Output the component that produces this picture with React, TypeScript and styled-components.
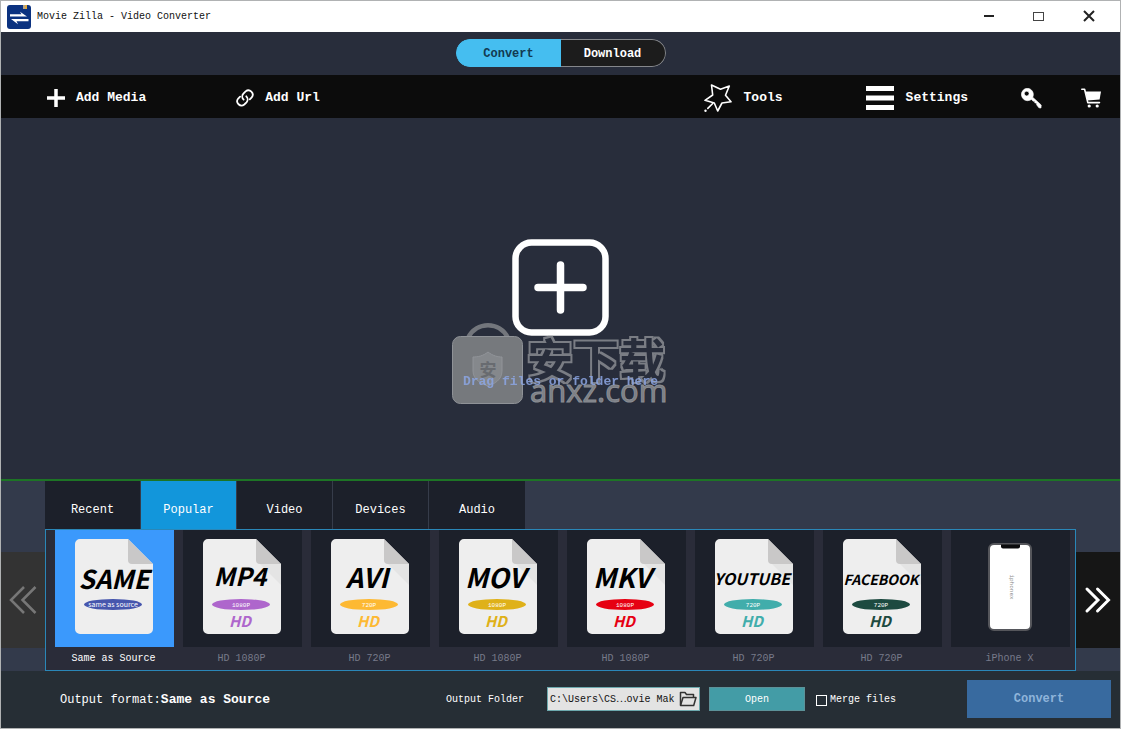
import React, { useState } from 'react';
import styled, { createGlobalStyle } from 'styled-components';

const mono = "'Liberation Mono', 'Noto Sans CJK SC', monospace";
const sans = "'Noto Sans CJK SC', 'Open Sans', sans-serif";

const GlobalStyle = createGlobalStyle`
  *, *::before, *::after { box-sizing: border-box; }
  body { margin: 0; background: #282d3b; }
  button, input { font: inherit; color: inherit; margin: 0; }
  svg { display: block; flex: none; }
`;

const Window = styled.div`
  display: flex;
  flex-direction: column;
  min-height: 100vh;
  border: 1px solid #b0b2b3;
  background: #282d3b;
  color: #fff;
  font-family: ${mono};
  font-size: 12px;
  line-height: 16px;
`;

const TitleBar = styled.header`
  display: flex;
  align-items: center;
  height: 31px;
  padding: 0 23px 0 6px;
  background: #fff;
  color: #111;
`;

const AppTitle = styled.h1`
  flex: 1;
  margin: 0 0 0 6px;
  font-size: 10px;
  font-weight: 400;
  line-height: 16px;
`;

const WindowControls = styled.div`
  display: flex;
  gap: 34px;
`;

const IconButton = styled.button`
  display: flex;
  align-items: center;
  justify-content: center;
  padding: 0;
  border: 0;
  background: none;
  cursor: pointer;
`;

const ModeBar = styled.div`
  display: flex;
  align-items: center;
  justify-content: center;
  height: 43px;
  padding-bottom: 1px;
`;

const ModeSwitch = styled.div`
  display: flex;
  width: 210px;
  height: 28px;
  border-radius: 14px;
  overflow: hidden;
`;

const ModeButton = styled.button<{ $active: boolean }>`
  flex: 1;
  padding: 1px 0 0;
  border: 1px solid ${(p) => (p.$active ? '#45bef0' : '#85878b')};
  background: ${(p) => (p.$active ? '#45bef0' : '#1c1c1c')};
  color: ${(p) => (p.$active ? '#123a52' : '#fff')};
  font-weight: 700;
  cursor: pointer;
  &:first-child { border-radius: 14px 0 0 14px; border-right: 0; }
  &:last-child { border-radius: 0 14px 14px 0; border-left: 0; }
`;

const Toolbar = styled.nav`
  display: flex;
  align-items: center;
  justify-content: space-between;
  height: 43px;
  padding: 3px 19px 0 46px;
  background: #0c0c0c;
`;

const ToolGroup = styled.div<{ $gap: number }>`
  display: flex;
  align-items: center;
  gap: ${(p) => p.$gap}px;
`;

const ToolButton = styled.button<{ $gap?: number }>`
  display: flex;
  align-items: center;
  gap: ${(p) => p.$gap ?? 12}px;
  padding: 0;
  border: 0;
  background: none;
  font-size: 13px;
  font-weight: 700;
  line-height: 16px;
  cursor: pointer;
`;

const DropArea = styled.main`
  display: flex;
  flex: 1;
  align-items: center;
  justify-content: center;
  min-height: 240px;
  padding-top: 32px;
`;

const DropPrompt = styled.div`
  position: relative;
  display: flex;
  flex-direction: column;
  align-items: center;
  gap: 38px;
`;

const DropText = styled.p`
  position: relative;
  z-index: 1;
  margin: 0;
  color: #8ca6e4;
  opacity: 0.85;
  font-size: 13px;
  font-weight: 700;
  line-height: 16px;
`;

const Watermark = styled.div`
  position: absolute;
  left: -11px;
  top: 84px;
  pointer-events: none;
`;

const Formats = styled.section`
  display: grid;
  grid-template-columns: 44px minmax(0, 1fr) 44px;
  grid-template-rows: 48px auto;
  border-top: 2px solid #1d7425;
  background: #333a4b;
`;

const Tabs = styled.div`
  display: flex;
  grid-column: 2;
  grid-row: 1;
`;

const Tab = styled.button<{ $active: boolean }>`
  width: 96px;
  padding: 10px 0 0;
  border: 0;
  border-right: 1px solid #363c4a;
  background: ${(p) => (p.$active ? '#1296db' : '#1c202a')};
  cursor: pointer;
  &:last-child { border-right: 0; }
`;

const Pager = styled.button<{ $enabled: boolean }>`
  grid-row: 2;
  grid-column: ${(p) => (p.$enabled ? 3 : 1)};
  align-self: center;
  display: flex;
  align-items: center;
  justify-content: center;
  height: 96px;
  padding: 0;
  border: 0;
  background: ${(p) => (p.$enabled ? '#161616' : '#333')};
  color: ${(p) => (p.$enabled ? '#fff' : '#777')};
`;

const CardList = styled.div`
  grid-column: 2;
  grid-row: 2;
  display: flex;
  gap: 9px;
  padding: 0 5px 0 9px;
  border: 1px solid #2a87b8;
  background: #2a2c39;
`;

const Card = styled.button<{ $active: boolean }>`
  display: flex;
  flex: 1;
  flex-direction: column;
  min-width: 0;
  padding: 0;
  border: 0;
  background: none;
  color: ${(p) => (p.$active ? '#fff' : '#777a8a')};
  font-size: 10px;
  line-height: 23px;
  cursor: pointer;
`;

const Thumb = styled.span<{ $active: boolean }>`
  display: flex;
  align-items: center;
  justify-content: center;
  width: 100%;
  height: 117px;
  padding: 0 2px 4px 0;
  background: ${(p) => (p.$active ? '#3b99fc' : '#1c202a')};
`;

const CardName = styled.span`
  width: 100%;
  padding-right: 2px;
  text-align: center;
`;

const Footer = styled.footer`
  display: flex;
  align-items: center;
  justify-content: space-between;
  height: 57px;
  padding: 0 9px 1px 59px;
  background: #262e35;
`;

const OutputFormat = styled.div`
  display: flex;
  align-items: baseline;
  padding-top: 2px;
  strong { font-size: 13px; }
`;

const Actions = styled.div`
  display: flex;
  align-items: center;
  font-size: 10px;
`;

const FolderLabel = styled.label`
  margin-right: 23px;
  padding-top: 2px;
`;

const FolderField = styled.div`
  display: flex;
  align-items: center;
  width: 153px;
  height: 24px;
  margin-right: 9px;
  padding-right: 2px;
  border: 1px solid #6da9ad;
  background: #e3e3e3;
  color: #111;
`;

const FolderInput = styled.input`
  flex: 1;
  min-width: 0;
  padding: 1px 0 0 2px;
  border: 0;
  outline: 0;
  background: none;
`;

const OpenButton = styled.button`
  width: 96px;
  height: 24px;
  margin-right: 11px;
  padding: 1px 0 0;
  border: 1px solid #5c9298;
  background: #439ca6;
  cursor: pointer;
`;

const MergeLabel = styled.label`
  display: flex;
  align-items: center;
  gap: 3px;
  margin-right: 71px;
  padding-top: 2px;
`;

const CheckBox = styled.input`
  appearance: none;
  width: 11px;
  height: 11px;
  border: 1px solid #fff;
  &:checked { background: #45bef0; }
`;

const ConvertButton = styled.button`
  width: 144px;
  height: 38px;
  padding: 0;
  border: 0;
  background: #386a9f;
  color: #8fb4da;
  font-size: 12px;
  font-weight: 700;
`;

const Logo = () => (
  <svg width="24" height="24" viewBox="0 0 24 24" aria-hidden="true">
    <rect width="24" height="24" rx="3" fill="#0b3280" />
    <path d="M16 0h4v4h-4z" fill="#b5a489" />
    <path d="M18 0h2v4h-2z" fill="#e0a93c" />
    <path d="M3 9.200H14.500L13 6.800 20 11.500H3zM21.500 14H4l7 5.200-1.500-3h12z" fill="#fff" />
  </svg>
);

const LinkIcon = () => (
  <svg width="18" height="18" viewBox="0 0 18 18" fill="none" stroke="#fff" strokeWidth="1.8" strokeLinecap="round" aria-hidden="true">
    <path d="M7.600 10.600A4.300 4.300 0 0 1 7.400 4.600L9.600 2.400A4.300 4.300 0 0 1 15.700 8.400L13.800 10.300" />
    <path d="M10.300 7.300A4.300 4.300 0 0 1 10.500 13.300L8.300 15.500A4.300 4.300 0 0 1 2.200 9.500L4.100 7.600" />
  </svg>
);

const StarWand = () => (
  <svg width="28" height="28" viewBox="-1 -1 28 28" fill="none" stroke="#fff" strokeWidth="1.6" strokeLinejoin="round" strokeLinecap="round" aria-hidden="true">
    <path d="M6.500 0L15.500 4.200 24.300 1 20.500 10.300 26 16.800 17 18 12.700 26 9.300 18 0 15.300 7.700 10z" />
    <path d="M7.700 18.500L2.800 23.400" />
    <circle cx=".5" cy="25.700" r="1.200" fill="#fff" stroke="none" />
  </svg>
);

const KeyIcon = () => (
  <svg width="21" height="21" viewBox="0 0 21 21" aria-hidden="true">
    <path
      d="M6.500 .3a6.200 6.200 0 1 0 2.300 12l1.600-.8 1.700 1.700h1.700v1.800h1.800v1.800l2.300 3 2.100.2.200-3L11.700 9.200A6.200 6.200 0 0 0 6.500 .3zM5.700 3.200a2.400 2.400 0 1 1 0 4.800 2.400 2.400 0 0 1 0-4.800z"
      fill="#fff"
      stroke="#fff"
      strokeWidth=".6"
      fillRule="evenodd"
    />
  </svg>
);

const CartIcon = () => (
  <svg width="20" height="20" viewBox="0 0 20 20" aria-hidden="true">
    <path d="M.8 1.200H3.600L6.800 14.600H18.500" fill="none" stroke="#fff" strokeWidth="1.600" strokeLinejoin="round" strokeLinecap="round" />
    <path d="M4.500 3.500H20L18.600 11.500 6.400 12.600z" fill="#fff" />
    <circle cx="8.200" cy="18" r="1.600" fill="#fff" />
    <circle cx="16.200" cy="18" r="1.600" fill="#fff" />
  </svg>
);

const FolderIcon = () => (
  <svg width="18" height="16" viewBox="0 0 18 16" fill="none" stroke="#333" strokeWidth="1.500" strokeLinejoin="round" aria-hidden="true">
    <path d="M1.500 14V1.500H6L7.500 3.500H14.500V6" />
    <path d="M1.500 14.500L4 6.500H17L14.700 14.500z" />
  </svg>
);

const Chevrons = ({ left }: { left?: boolean }) => (
  <svg width="28" height="28" viewBox="0 0 28 28" fill="none" stroke="currentColor" strokeWidth={left ? 2.5 : 3} strokeLinecap={left ? 'butt' : 'round'} aria-hidden="true">
    {left ? <path d="M15 1L2 14l13 13M26.500 1l-13 13 13 13" /> : <path d="M3 3l11 11L3 25M13.500 3l11 11-11 11" />}
  </svg>
);

interface Format {
  name: string;
  caption: string;
  color: string;
  badge: string;
  size: number;
  x: number;
  baseline: number;
}

const DocIcon = ({ f }: { f: Format }) => {
  const isSource = f.name === 'SAME';
  return (
    <svg width="78" height="95" viewBox="0 0 78 95" overflow="visible" aria-hidden="true">
      <path d="M4 0H53L78 25V90a5 5 0 0 1-5 5H5a5 5 0 0 1-5-5V5a5 5 0 0 1 5-5z" fill="#eee" />
      {!isSource && <path d="M57 25H78V46z" fill="#e4e4e4" />}
      <path d="M53 0L78 25H57a4 4 0 0 1-4-4z" fill="#c9c8c8" />
      <text x={f.x} y={f.baseline} textAnchor="middle" fontFamily={sans} fontSize={f.size} fontWeight="700" fontStyle="italic" fill="#000">
        {f.name}
      </text>
      <ellipse cx="38" cy="65.500" rx="29" ry="5.500" fill={f.color} />
      <text x="38" y={isSource ? 68 : 67.5} textAnchor="middle" fontFamily={isSource ? sans : mono} fontSize={isSource ? 7 : 6} fill="#fff">
        {f.badge}
      </text>
      {!isSource && (
        <text x="37" y="88" textAnchor="middle" fontFamily={sans} fontSize="15" fontWeight="700" fontStyle="italic" fill={f.color}>
          HD
        </text>
      )}
    </svg>
  );
};

const PhoneIcon = () => (
  <svg width="44" height="88" viewBox="0 0 44 88" aria-hidden="true">
    <rect x="1" y="1" width="42" height="86" rx="5" fill="#fff" stroke="#55565b" strokeWidth="2" />
    <path d="M13 1.500H32V3.500a2 2 0 0 1-2 2H15a2 2 0 0 1-2-2z" fill="#0b0b0d" />
    <text x="22" y="44" transform="rotate(90 22 44)" textAnchor="middle" fontFamily={mono} fontSize="6" fill="#888">
      iphonex
    </text>
  </svg>
);

const formats: Format[] = [
  { name: 'SAME', caption: 'Same as Source', color: '#4656ad', badge: 'same as source', size: 26, x: 39, baseline: 50 },
  { name: 'MP4', caption: 'HD 1080P', color: '#ae66cc', badge: '1080P', size: 25, x: 37, baseline: 47 },
  { name: 'AVI', caption: 'HD 720P', color: '#fdb933', badge: '720P', size: 27, x: 36, baseline: 49 },
  { name: 'MOV', caption: 'HD 1080P', color: '#dfb119', badge: '1080P', size: 27, x: 36, baseline: 49 },
  { name: 'MKV', caption: 'HD 1080P', color: '#e60012', badge: '1080P', size: 27, x: 35, baseline: 49 },
  { name: 'YOUTUBE', caption: 'HD 720P', color: '#41adab', badge: '720P', size: 16, x: 37, baseline: 46 },
  { name: 'FACEBOOK', caption: 'HD 720P', color: '#1d4a40', badge: '720P', size: 14, x: 38, baseline: 46 },
];

const tabs = ['Recent', 'Popular', 'Video', 'Devices', 'Audio'];

export default function App() {
  const [mode, setMode] = useState('Convert');
  const [tab, setTab] = useState('Popular');
  const [selected, setSelected] = useState('SAME');
  const [folder, setFolder] = useState('C:\\Users\\CS⋯ovie Mak');

  return (
    <>
      <GlobalStyle />
      <Window>
        <TitleBar>
          <Logo />
          <AppTitle>Movie Zilla - Video Converter</AppTitle>
          <WindowControls>
            <IconButton aria-label="Minimize">
              <svg width="16" height="16"><path d="M3 7h10" stroke="#222" strokeWidth="2" /></svg>
            </IconButton>
            <IconButton aria-label="Maximize">
              <svg width="16" height="16"><rect x="2.500" y="3.500" width="10" height="8" fill="none" stroke="#444" /></svg>
            </IconButton>
            <IconButton aria-label="Close">
              <svg width="16" height="16"><path d="M3 2l10 10M13 2L3 12" stroke="#222" strokeWidth="2" /></svg>
            </IconButton>
          </WindowControls>
        </TitleBar>

        <ModeBar>
          <ModeSwitch>
            {['Convert', 'Download'].map((m) => (
              <ModeButton key={m} $active={m === mode} onClick={() => setMode(m)}>{m}</ModeButton>
            ))}
          </ModeSwitch>
        </ModeBar>

        <Toolbar>
          <ToolGroup $gap={90}>
            <ToolButton $gap={11}>
              <svg width="18" height="18" aria-hidden="true"><path d="M9 0v18M0 9h18" stroke="#fff" strokeWidth="3.500" /></svg>
              Add Media
            </ToolButton>
            <ToolButton $gap={11}>
              <LinkIcon />
              Add Url
            </ToolButton>
          </ToolGroup>
          <ToolGroup $gap={53}>
            <ToolGroup $gap={83}>
              <ToolButton>
                <StarWand />
                Tools
              </ToolButton>
              <ToolButton>
                <svg width="28" height="24" aria-hidden="true">
                  <path d="M0 2.500h28M0 12h28M0 21.500h28" stroke="#fff" strokeWidth="5" />
                </svg>
                Settings
              </ToolButton>
            </ToolGroup>
            <ToolGroup $gap={39}>
              <IconButton aria-label="Register"><KeyIcon /></IconButton>
              <IconButton aria-label="Buy"><CartIcon /></IconButton>
            </ToolGroup>
          </ToolGroup>
        </Toolbar>

        <DropArea>
          <DropPrompt>
            <IconButton aria-label="Add files">
              <svg width="97" height="97" viewBox="0 0 97 97" fill="none" stroke="#fff">
                <rect x="3.500" y="3.500" width="90" height="90" rx="16" strokeWidth="6.500" />
                <path d="M48.500 26v45M26 48.500h45" strokeWidth="7.500" strokeLinecap="round" />
              </svg>
            </IconButton>
            <DropText>Drag files or folder here</DropText>
            <Watermark aria-hidden="true">
              <svg width="214" height="82" viewBox="0 0 214 82">
                <defs>
                  <filter id="outline" x="-5%" y="-10%" width="110%" height="120%">
                    <feMorphology in="SourceAlpha" operator="dilate" radius="2" result="outer" />
                    <feFlood floodColor="#7a7d84" />
                    <feComposite operator="in" in2="outer" />
                    <feComposite operator="out" in2="SourceAlpha" />
                  </filter>
                </defs>
                <path d="M16 15C24-2 48-2 56 15" fill="none" stroke="#73767c" strokeWidth="4.500" />
                <rect x=".5" y="13.500" width="70" height="67" rx="8" fill="#76797d" stroke="#8f9297" />
                <path d="M36 29c5 4 10 5 14 5v14c0 9-8 13-14 15-6-2-15-6-15-15V34c5 0 10-1 15-5z" fill="#85888c" stroke="#919499" />
                <text x="36" y="53" textAnchor="middle" fontFamily={sans} fontSize="17" fontWeight="700" fill="#686b70">安</text>
                <text x="75" y="54" fontFamily={sans} fontSize="46" fontWeight="700" filter="url(#outline)">安下载</text>
                <text x="78" y="79" fontFamily="'Open Sans', sans-serif" fontSize="31" fontWeight="400" fill="#7b7e84" stroke="#8b8e94">anxz.com</text>
              </svg>
            </Watermark>
          </DropPrompt>
        </DropArea>

        <Formats>
          <Tabs role="tablist">
            {tabs.map((t) => (
              <Tab key={t} role="tab" aria-selected={t === tab} $active={t === tab} onClick={() => setTab(t)}>{t}</Tab>
            ))}
          </Tabs>
          <Pager $enabled={false} disabled aria-label="Previous formats"><Chevrons left /></Pager>
          <CardList>
            {formats.map((f) => (
              <Card key={f.name} $active={f.name === selected} onClick={() => setSelected(f.name)}>
                <Thumb $active={f.name === selected}><DocIcon f={f} /></Thumb>
                <CardName>{f.caption}</CardName>
              </Card>
            ))}
            <Card $active={selected === 'iPhone X'} onClick={() => setSelected('iPhone X')}>
              <Thumb $active={selected === 'iPhone X'}><PhoneIcon /></Thumb>
              <CardName>iPhone X</CardName>
            </Card>
          </CardList>
          <Pager $enabled aria-label="Next formats"><Chevrons /></Pager>
        </Formats>

        <Footer>
          <OutputFormat>
            <span>Output format:</span>
            <strong>Same as Source</strong>
          </OutputFormat>
          <Actions>
            <FolderLabel htmlFor="output-folder">Output Folder</FolderLabel>
            <FolderField>
              <FolderInput id="output-folder" value={folder} onChange={(e) => setFolder(e.target.value)} />
              <IconButton aria-label="Browse"><FolderIcon /></IconButton>
            </FolderField>
            <OpenButton>Open</OpenButton>
            <MergeLabel>
              <CheckBox type="checkbox" />
              Merge files
            </MergeLabel>
            <ConvertButton>Convert</ConvertButton>
          </Actions>
        </Footer>
      </Window>
    </>
  );
}
